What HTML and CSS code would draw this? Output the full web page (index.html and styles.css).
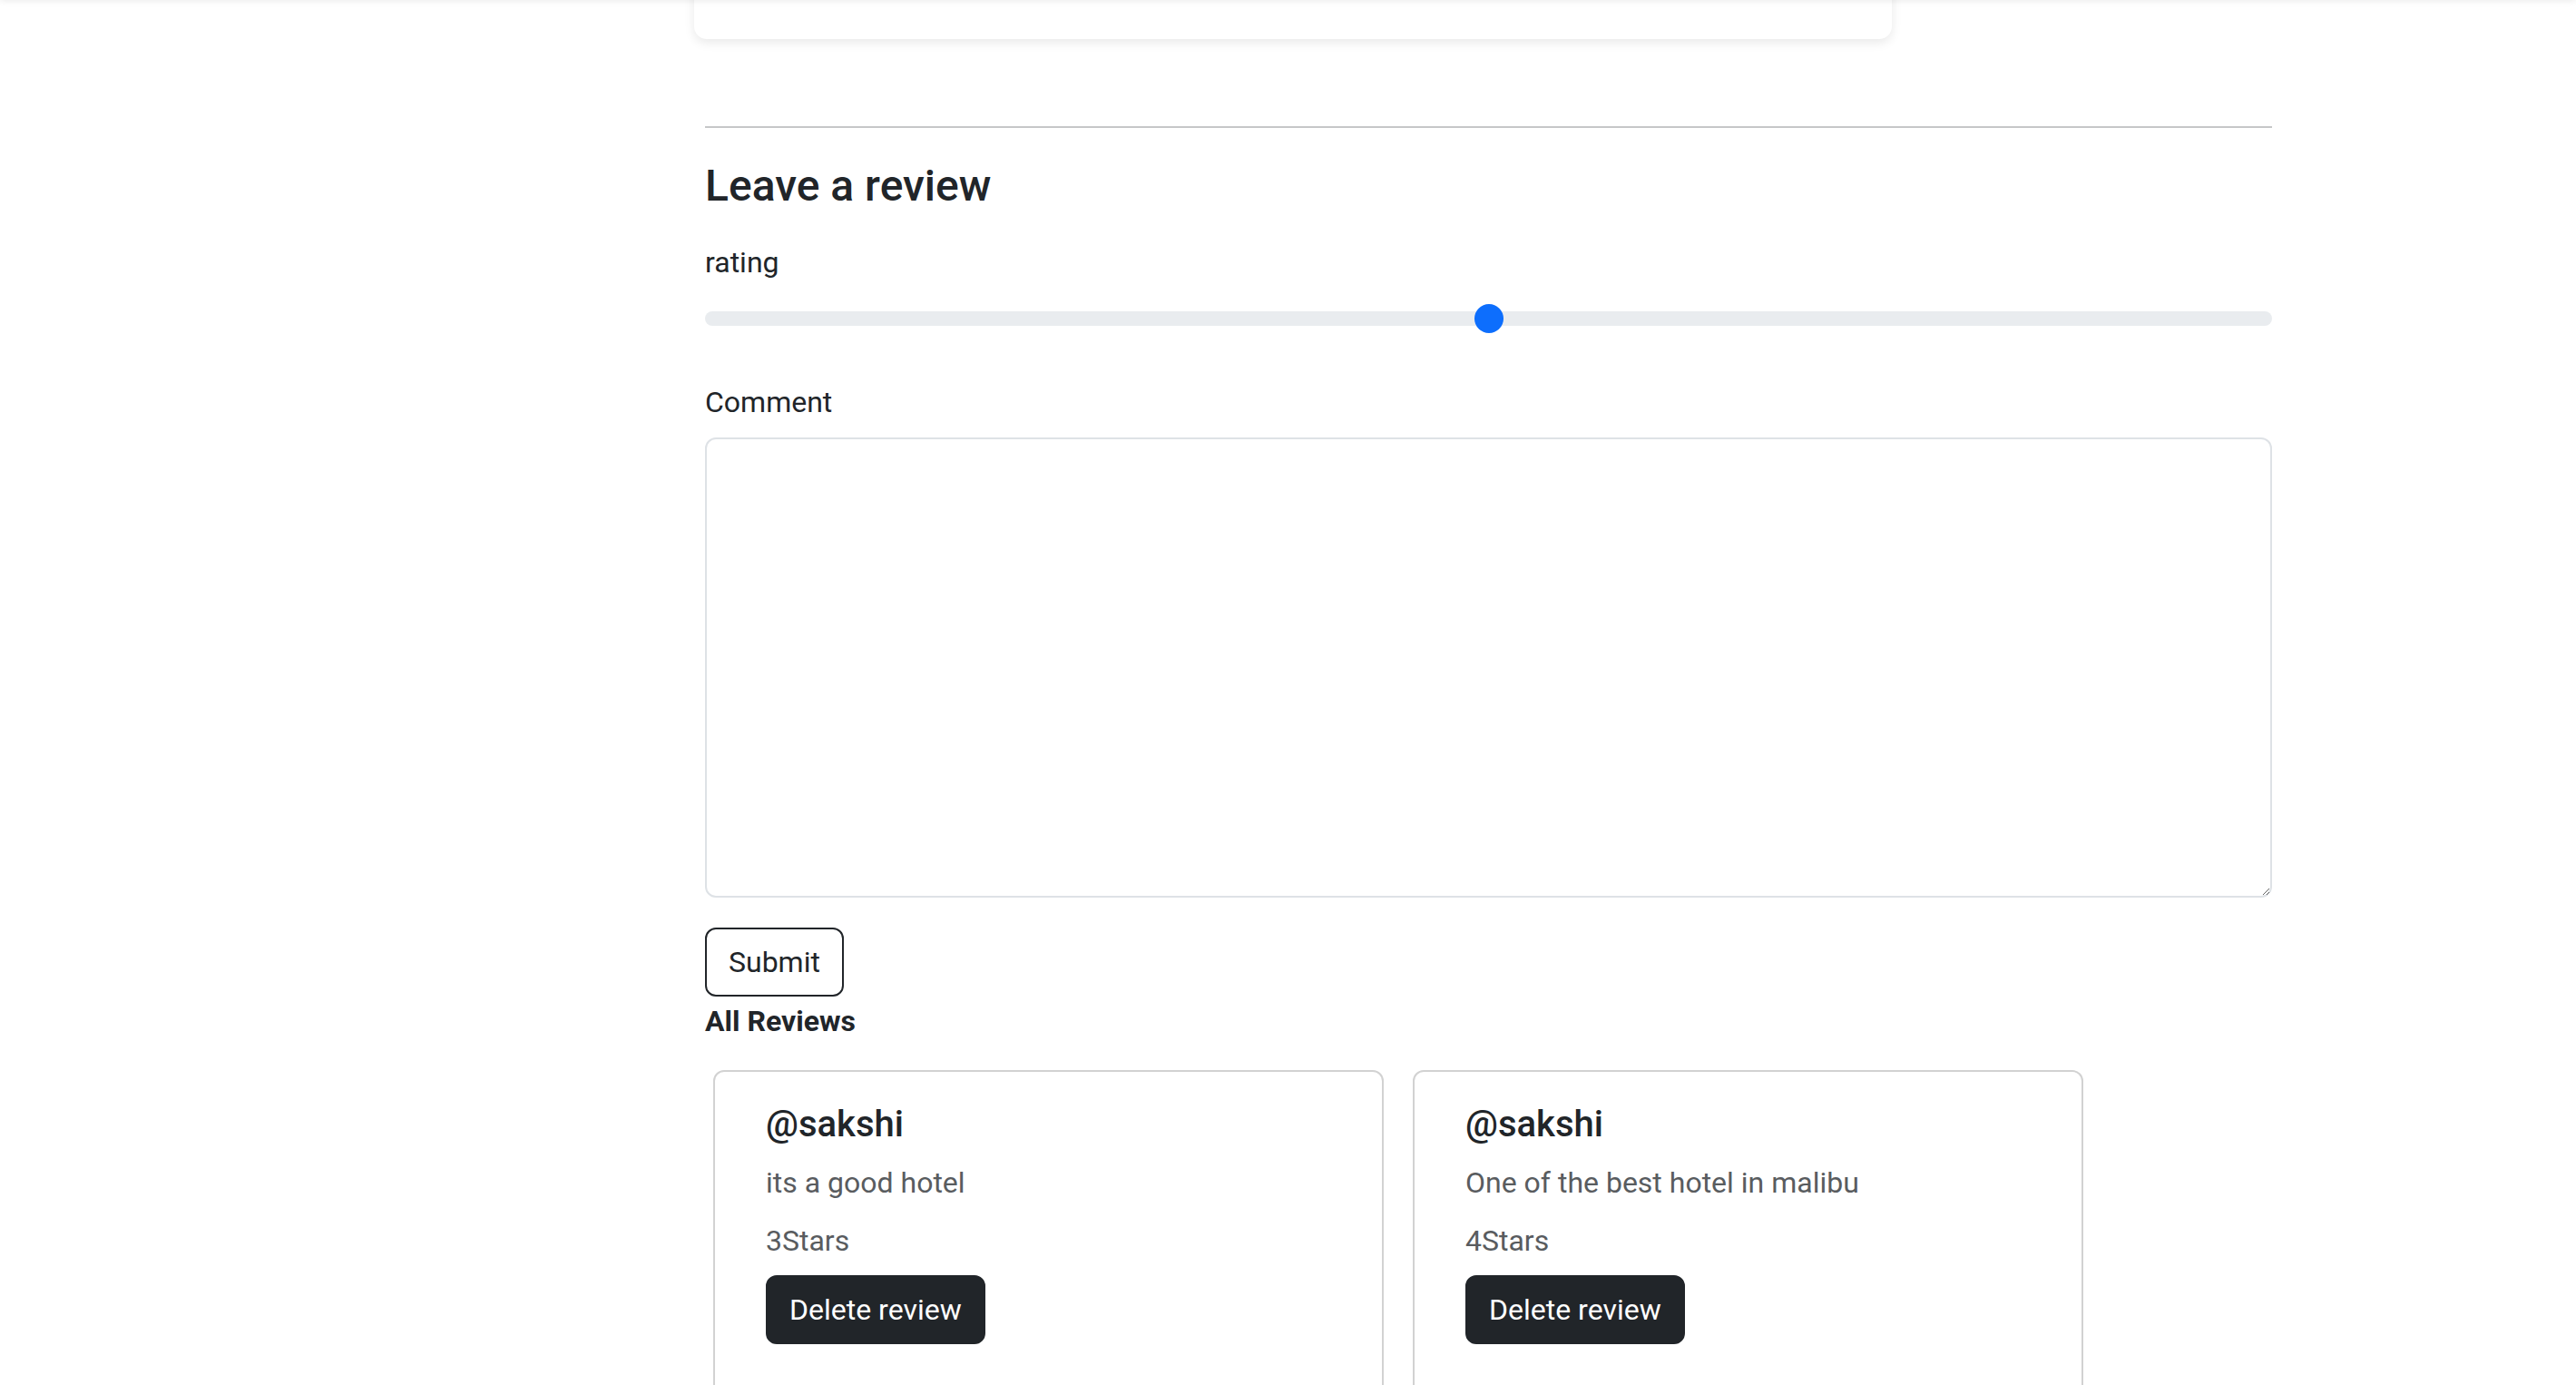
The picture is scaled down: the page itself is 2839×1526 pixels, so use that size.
FILE: index.html
```html
<!DOCTYPE html>
<html lang="en">
<head>
<meta charset="utf-8">
<title>Listing - Reviews</title>
<link rel="stylesheet" href="styles.css">
</head>
<body>
<div class="topbar-shadow"></div>
<div class="listing-card"></div>

<main class="page">
  <hr class="divider">
  <h4 class="section-title">Leave a review</h4>
  <form class="review-form">
    <label class="form-label label-rating" for="rating">rating</label>
    <input class="form-range" type="range" id="rating" name="rating" min="1" max="5" value="3">
    <label class="form-label label-comment" for="comment">Comment</label>
    <textarea class="form-control" id="comment" name="comment"></textarea>
    <button class="btn btn-outline-dark" type="button">Submit</button>
  </form>

  <p class="all-reviews"><b>All Reviews</b></p>

  <div class="reviews-row">
    <div class="card">
      <h5 class="card-title">@sakshi</h5>
      <p class="card-text">its a good hotel</p>
      <p class="card-text stars">3Stars</p>
      <form class="delete-form">
        <button class="btn btn-dark" type="button">Delete review</button>
      </form>
    </div>
    <div class="card">
      <h5 class="card-title">@sakshi</h5>
      <p class="card-text">One of the best hotel in malibu</p>
      <p class="card-text stars">4Stars</p>
      <form class="delete-form">
        <button class="btn btn-dark" type="button">Delete review</button>
      </form>
    </div>
  </div>
</main>
</body>
</html>
```

FILE: styles.css
```css
* {
  box-sizing: border-box;
}

html, body {
  margin: 0;
  padding: 0;
  background: #ffffff;
}

body {
  font-family: Roboto, "Liberation Sans", Arial, sans-serif;
  font-size: 32px;
  line-height: 48px;
  color: #212529;
  overflow: hidden;
}

.topbar-shadow {
  position: fixed;
  top: -12px;
  left: 0;
  right: 0;
  height: 12px;
  background: #ffffff;
  box-shadow: 0 0 8px rgba(0, 0, 0, 0.10);
  z-index: 10;
}

.listing-card {
  margin-top: -40px;
  margin-left: 765px;
  width: 1320px;
  height: 83px;
  background: #ffffff;
  border-radius: 14px;
  box-shadow: 0 4px 12px rgba(0, 0, 0, 0.09);
}

.page {
  margin-left: 777px;
  width: 1727px;
}

.divider {
  margin: 96px 0 32px;
  height: 0;
  border: 0;
  border-top: 2px solid #c6c7c8;
}

.section-title {
  margin: 0 0 29px;
  padding-top: 3px;
  font-size: 48px;
  line-height: 57.6px;
  font-weight: 500;
}

.review-form {
  margin: 0;
}

.form-label {
  display: block;
  padding-top: 2px;
  line-height: 48px;
}

.label-rating {
  margin-bottom: 14px;
}

.label-comment {
  margin-top: 42px;
  margin-bottom: 15px;
}

.form-range {
  display: block;
  width: 100%;
  height: 48px;
  margin: 0;
  padding: 0;
  background: transparent;
  -webkit-appearance: none;
  appearance: none;
}

.form-range::-webkit-slider-runnable-track {
  height: 16px;
  background: #e9ecef;
  border-radius: 16px;
  border: 0;
}

.form-range::-webkit-slider-thumb {
  -webkit-appearance: none;
  appearance: none;
  width: 32px;
  height: 32px;
  margin-top: -8px;
  border: 0;
  border-radius: 50%;
  background: #0d6efd;
}

.form-control {
  display: block;
  width: 100%;
  height: 507px;
  margin: 0;
  padding: 12px 24px;
  border: 2px solid #dee2e6;
  border-radius: 12px;
  font-family: inherit;
  font-size: 32px;
  line-height: 48px;
  color: #212529;
  background: #ffffff;
  resize: vertical;
  outline: none;
}

.btn {
  display: inline-block;
  padding: 12px 24px;
  border-radius: 12px;
  font-family: inherit;
  font-size: 32px;
  line-height: 48px;
  font-weight: 400;
  cursor: pointer;
}

.btn-outline-dark {
  margin-top: 33px;
  border: 2px solid #212529;
  background: transparent;
  color: #212529;
  vertical-align: top;
}

.btn-dark {
  border: 2px solid #212529;
  background: #212529;
  color: #ffffff;
}

.all-reviews {
  margin: 0 0 30px;
  padding-top: 3px;
  line-height: 48px;
}

.all-reviews b {
  font-weight: 700;
}

.reviews-row {
  display: flex;
  gap: 32px;
  padding-left: 9px;
}

.card {
  width: 739px;
  flex: none;
  padding: 32px 56px;
  border: 2px solid #d2d2d2;
  border-radius: 12px;
  background: #ffffff;
}

.card-title {
  margin: 0 0 14px;
  padding-top: 2px;
  font-size: 40px;
  line-height: 48px;
  font-weight: 500;
}

.card-text {
  margin: 0 0 14px;
  padding-top: 2px;
  color: #595c5f;
}

.delete-form {
  margin: 0 0 32px;
}
```
